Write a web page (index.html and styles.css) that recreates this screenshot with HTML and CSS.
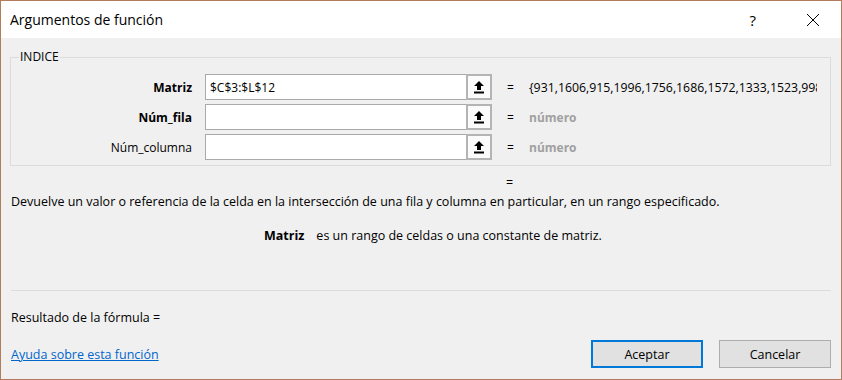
FILE: index.html
```html
<!DOCTYPE html>
<html lang="es">
<head>
  <meta charset="UTF-8" />
  <title>Argumentos de función</title>
  <link rel="stylesheet" href="styles.css">
</head>
<body>
  <div class="window">
    <div class="titlebar">
      <span class="title">Argumentos de función</span>
      <span class="help">?</span>
      <svg class="close" width="14" height="14" viewBox="0 0 14 14">
        <path d="M1 1 L13 13 M13 1 L1 13" stroke="#000" stroke-width="1" fill="none" />
      </svg>
    </div>

    <div class="content">
      <fieldset class="group">
        <legend>INDICE</legend>
        <div class="arg-row">
          <label class="arg-name bold" for="matriz">Matriz</label>
          <div class="field">
            <input type="text" id="matriz" value="$C$3:$L$12" />
            <span class="ref-btn">
              <svg width="12" height="14" viewBox="0 0 12 14"><path d="M6 1 L11 6 L8 6 L8 10 L4 10 L4 6 L1 6 Z" fill="#000"/><rect x="1" y="11.5" width="10" height="2" fill="#000"/></svg>
            </span>
          </div>
          <span class="eq">=</span>
          <span class="value">{931,1606,915,1996,1756,1686,1572,1333,1523,998</span>
        </div>
        <div class="arg-row">
          <label class="arg-name bold" for="fila">Núm_fila</label>
          <div class="field">
            <input type="text" id="fila" />
            <span class="ref-btn">
              <svg width="12" height="14" viewBox="0 0 12 14"><path d="M6 1 L11 6 L8 6 L8 10 L4 10 L4 6 L1 6 Z" fill="#000"/><rect x="1" y="11.5" width="10" height="2" fill="#000"/></svg>
            </span>
          </div>
          <span class="eq">=</span>
          <span class="value hint">número</span>
        </div>
        <div class="arg-row">
          <label class="arg-name" for="columna">Núm_columna</label>
          <div class="field">
            <input type="text" id="columna" />
            <span class="ref-btn">
              <svg width="12" height="14" viewBox="0 0 12 14"><path d="M6 1 L11 6 L8 6 L8 10 L4 10 L4 6 L1 6 Z" fill="#000"/><rect x="1" y="11.5" width="10" height="2" fill="#000"/></svg>
            </span>
          </div>
          <span class="eq">=</span>
          <span class="value hint">número</span>
        </div>
      </fieldset>

      <div class="result-eq">=</div>
      <p class="description">Devuelve un valor o referencia de la celda en la intersección de una fila y columna en particular, en un rango especificado.</p>
      <p class="arg-help"><b>Matriz</b><span>es un rango de celdas o una constante de matriz.</span></p>

      <hr class="separator" />
      <p class="formula-result">Resultado de la fórmula =</p>

      <div class="footer">
        <a href="#" class="help-link">Ayuda sobre esta función</a>
        <div class="buttons">
          <button class="btn btn-default">Aceptar</button>
          <button class="btn">Cancelar</button>
        </div>
      </div>
    </div>
  </div>
</body>
</html>
```

FILE: styles.css
```css
html, body {
  margin: 0;
  padding: 0;
}

body {
  font-family: 'Open Sans', 'Noto Sans', sans-serif;
  font-size: 12.5px;
  color: #000;
  background: #f0f0f0;
}

.window {
  width: 842px;
  height: 380px;
  box-sizing: border-box;
  border: 1px solid #b47c5c;
  background: #f0f0f0;
  display: flex;
  flex-direction: column;
}

.titlebar {
  height: 37px;
  background: #fff;
  display: flex;
  align-items: center;
  padding-left: 9px;
  flex-shrink: 0;
}

.title {
  font-size: 14px;
  flex: 1;
}

.help {
  font-size: 15px;
  margin-right: 50px;
}

.close {
  margin-right: 21px;
}

.content {
  flex: 1;
  padding: 0 10px 0 9px;
  display: flex;
  flex-direction: column;
}

.group {
  margin: 11px 0 0 0;
  padding: 9px 0 5px 0;
  border: 1px solid #dcdcdc;
  display: flex;
  flex-direction: column;
  gap: 4px;
  font-size: 12px;
}

.group legend {
  margin-left: 8px;
  padding: 0 1px;
  line-height: 16px;
}

.arg-row {
  display: flex;
  align-items: center;
  height: 26px;
}

.arg-name {
  width: 181px;
  text-align: right;
  margin-right: 13px;
}

.bold {
  font-weight: bold;
}

.field {
  display: flex;
  width: 287px;
  height: 26px;
}

.field input {
  flex: 1;
  min-width: 0;
  height: 26px;
  box-sizing: border-box;
  border: 1px solid #a9a9a9;
  border-right: none;
  padding: 0 4px;
  font-family: inherit;
  font-size: 12px;
  background: #fff;
  outline: none;
}

.ref-btn {
  width: 26px;
  height: 26px;
  box-sizing: border-box;
  border: 2px solid #b4b4b4;
  background: #fbfbfb;
  display: flex;
  align-items: center;
  justify-content: center;
}

.eq {
  margin-left: 15px;
  width: 22px;
}

.value {
  white-space: nowrap;
  overflow: hidden;
  width: 288px;
  font-size: 12.3px;
}

.hint {
  color: #a0a0a0;
  font-weight: bold;
  font-size: 12px;
}

.result-eq {
  margin: 9px 0 0 496px;
  line-height: 16px;
}

.description {
  margin: 3px 0 0 1px;
  line-height: 16px;
}

.arg-help {
  margin: 18px 0 0 254px;
  line-height: 16px;
}

.arg-help span {
  margin-left: 12px;
}

.separator {
  margin: 46px 0 0 1px;
  border: none;
  border-top: 1px solid #dcdcdc;
  height: 0;
}

.formula-result {
  margin: 19px 0 0 1px;
  line-height: 16px;
}

.footer {
  margin-top: auto;
  margin-bottom: 11px;
  display: flex;
  align-items: center;
  justify-content: space-between;
  padding-left: 1px;
}

.help-link {
  color: #0066cc;
  text-decoration: underline;
}

.buttons {
  display: flex;
  gap: 16px;
}

.btn {
  width: 112px;
  height: 28px;
  box-sizing: border-box;
  background: #e1e1e1;
  border: 1px solid #adadad;
  font-family: inherit;
  font-size: 12.5px;
  color: #000;
  padding: 0;
}

.btn-default {
  border: 2px solid #0078d7;
}
```
